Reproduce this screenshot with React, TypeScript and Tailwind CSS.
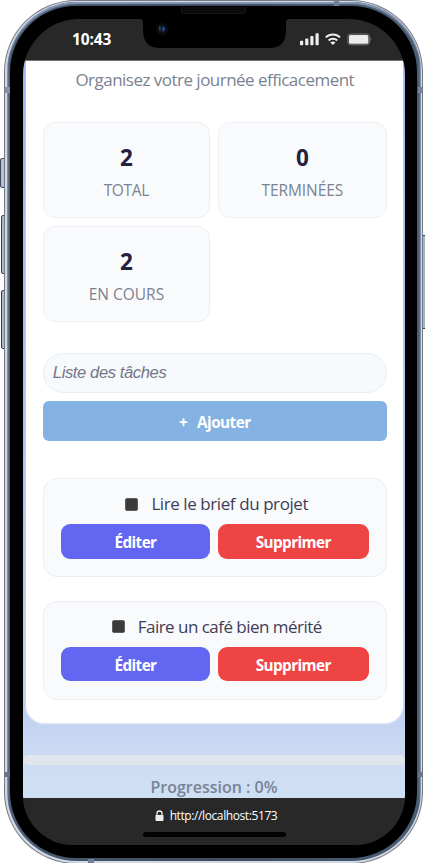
import React from "react";

const ui = "font-['Open_Sans','Noto_Sans',sans-serif]";

function Stat({ value, label, tracking }: { value: string; label: string; tracking: string }) {
  return (
    <div className="flex h-[96px] flex-col items-center rounded-[12px] border border-[#eeeff4] bg-[#f9fafc] pt-[21px]">
      <span className="text-[22.5px] leading-[28px] font-bold text-[#25213f]">{value}</span>
      <span className={"mt-[8px] text-[15.5px] leading-[20px] whitespace-nowrap text-[#7b8291] " + tracking}>{label}</span>
    </div>
  );
}

function Task({ title, tracking }: { title: string; tracking: string }) {
  return (
    <div className="h-[99px] rounded-[14px] border border-[#eceef3] bg-[#f9fafc] px-[17.2px] pt-[13px]">
      <div className="flex h-[24px] items-center justify-center pl-[4px]">
        <span className="mr-[13px] size-[13px] rounded-[2px] border border-[#5d5f60] bg-[#3b3b3b]" />
        <span className={"text-[17px] leading-[24px] whitespace-nowrap text-[#403d57] " + tracking}>{title}</span>
      </div>
      <div className="mt-[8px] grid grid-cols-[149px_1fr] gap-[8px] text-[15.3px] leading-[34px] font-bold tracking-[-0.6px] text-white">
        <button className="h-[34.5px] rounded-[9px] bg-[#6366f1] pt-px">Éditer</button>
        <button className="h-[34.5px] rounded-[9px] bg-[#ef4444] pt-px">Supprimer</button>
      </div>
    </div>
  );
}

function StatusIcons() {
  return (
    <svg className="mt-[11px] h-[18px] w-[76px]" viewBox="298 30 76 18" fill="none">
      <g fill="#ececec">
        <rect x="300" y="40.8" width="3.2" height="4.4" rx="0.8" />
        <rect x="305.2" y="38.6" width="3.2" height="6.6" rx="0.8" />
        <rect x="310.3" y="36" width="3.2" height="9.2" rx="0.8" />
        <rect x="315.5" y="33.2" width="3.2" height="12" rx="0.8" />
      </g>
      <g stroke="#ececec" strokeWidth="2">
        <path d="M325.8 37.4a10.2 10.2 0 0 1 14.2 0" />
        <path d="M328.6 40.5a6.2 6.2 0 0 1 8.6 0" />
      </g>
      <path d="M330.3 42.6a3.8 3.8 0 0 1 5.2 0L332.9 45z" fill="#ececec" />
      <rect x="347.9" y="34" width="21.6" height="10.8" rx="2.8" stroke="#777" strokeWidth="1" />
      <rect x="349" y="35" width="19.4" height="8.8" rx="1.6" fill="#ececec" />
      <path d="M370.7 37.6q1.4 1.6 0 3.6z" fill="#888" />
    </svg>
  );
}

function Phone({ children }: { children: React.ReactNode }) {
  return (
    <div className="relative h-[863px] w-[425px] overflow-hidden bg-white px-[4px]">
      <span className="absolute top-[158px] left-0 h-[30px] w-[6px] rounded-l-[2px] border border-[#3d4a5b] bg-[#b5c0d6]" />
      <span className="absolute top-[215px] left-[1px] h-[59px] w-[5px] rounded-l-[2px] border border-[#34404f] bg-[#aab8c8]" />
      <span className="absolute top-[290px] left-[1px] h-[59px] w-[5px] rounded-l-[2px] border border-[#34404f] bg-[#aab8c8]" />
      <span className="absolute top-[235px] left-[421px] h-[94px] w-[6px] border border-[#34404f] bg-[#a3b1c2]" />
      <div className="relative h-[864px] w-[419px] rounded-[72px] bg-[#737a84] p-px">
        <div className="h-full rounded-[71px] bg-[#d4d8e2] px-[1.5px] pt-px pb-[2px]">
          <div className="h-full rounded-[70px] bg-[linear-gradient(90deg,#8fa0b8_0,#4a5d74_2px,#3c4b5e_50%,#4a5d74_calc(100%-2px),#8fa0b8_100%)] px-[3.5px] pt-[4px] pb-[3px] shadow-[inset_0_2px_1px_#8799b7]">
            <div className="h-full rounded-[66px] bg-black px-[13px] pt-[13px] pb-[13px]">{children}</div>
          </div>
        </div>
      </div>
      <span className="absolute top-[87px] left-[5px] h-[6px] w-[5px] bg-[#8492ad]" />
      <span className="absolute top-[87px] left-[418px] h-[6px] w-[4px] bg-[#7583a0]" />
      <span className="absolute top-[772px] left-[5px] h-[5px] w-[5px] bg-[#67758e]" />
      <span className="absolute top-[772px] left-[418px] h-[5px] w-[4px] bg-[#67758e]" />
      <span className="absolute top-[1px] left-[334px] h-[5px] w-[5px] bg-[#71819f]" />
      <span className="absolute top-[859px] left-[88px] h-[4px] w-[6px] bg-[#71819f]" />
      <span className="absolute top-[7px] left-[181px] h-[7px] w-[65px] rounded-b-[2px] border-x border-b border-[#151515] bg-[#0b0b0b]" />
      <svg className="absolute top-[18px] left-[136px] h-[32px] w-[158px]" viewBox="136 18 158 32">
        <path d="M138 18.6C142 18.6 143 20 143 24V30Q143 48 160 48H269Q286 48 286 30V24C286 20 287 18.6 291 18.6Z" fill="#000" />
        <circle cx="162" cy="29" r="6" fill="#0b0c10" />
        <circle cx="162" cy="29" r="3.4" fill="#10182b" />
        <ellipse cx="159.8" cy="28.5" rx="1" ry="2.2" fill="#254850" />
        <ellipse cx="163.6" cy="29" rx="1.1" ry="2.3" fill="#344aaa" />
      </svg>
    </div>
  );
}

export default function App() {
  return (
    <div className={ui}>
      <Phone>
        <div className="flex h-[826px] w-[382px] flex-col overflow-hidden rounded-t-[56px] rounded-b-[50px] bg-[#282828]">
          <div className="flex h-[42px] shrink-0 justify-between border-b border-[#777] pr-[31px] pl-[49px]">
            <span className="pt-[9px] text-[15.5px] leading-[22px] font-bold tracking-[-0.1px] text-white">10:43</span>
            <StatusIcons />
          </div>
          <main className="h-[737px] shrink-0 overflow-hidden bg-[linear-gradient(180deg,#9db3ee_0%,#a9c0f0_50%,#bdcff0_88%,#c6d5f2_91%,#cedef3_97%)]">
            <section className="ml-[3px] h-[662px] w-[377px] rounded-b-[18px] bg-white pt-[7px] pr-[16.3px] pl-[16.8px] shadow-[0_1px_2px_#e8edf8]">
              <p className="text-center text-[17px] leading-[24px] tracking-[-0.52px] whitespace-nowrap text-[#7b8291]">Organisez votre journée efficacement</p>
              <div className="mt-[30px] grid grid-cols-[167.2px_1fr] gap-[8px]">
                <Stat value="2" label="TOTAL" tracking="tracking-[-0.3px]" />
                <Stat value="0" label="TERMINÉES" tracking="tracking-[-0.1px]" />
                <Stat value="2" label="EN COURS" tracking="tracking-[0px]" />
              </div>
              <input
                className="mt-[31px] block h-[40px] w-full rounded-[20px] border border-[#eaedf3] bg-[#f6fafd] px-[9px] font-['Liberation_Sans',sans-serif] text-[16.6px] tracking-[-0.4px] italic placeholder:text-[#757587] placeholder:opacity-100"
                placeholder="Liste des tâches"
              />
              <button className="mt-[8px] flex h-[40px] w-full items-center justify-center rounded-[6px] bg-[#84b2e2] pt-[2px] text-[15.3px] font-bold tracking-[-0.55px] text-white">
                <span className="mr-[10px]">+</span>Ajouter
              </button>
              <div className="mt-[37px] flex flex-col gap-[23.5px]">
                <Task title="Lire le brief du projet" tracking="tracking-[-0.42px]" />
                <Task title="Faire un café bien mérité" tracking="tracking-[-0.53px]" />
              </div>
            </section>
            <div className="mt-[32px] h-[10px] rounded-[5px] bg-[#dfe6ed]" />
            <p className="mt-[10px] text-center text-[16px] leading-[24px] font-semibold text-[#788396]">Progression : 0%</p>
          </main>
          <footer className="flex flex-1 flex-col items-center bg-[#282828]">
            <div className="mt-[9px] flex h-[17px] items-center pl-[4px] text-[12px] tracking-[-0.4px] text-white">
              <svg className="mr-[6px] h-[12px] w-[9px]" viewBox="0 0 9 12">
                <rect x="0.5" y="5" width="8" height="6" rx="0.8" fill="#eee" />
                <path d="M2 5V3.5a2.5 2.5 0 0 1 5 0V5" fill="none" stroke="#eee" strokeWidth="1.3" />
              </svg>
              http://localhost:5173
            </div>
            <div className="mt-[8px] h-[5px] w-[143px] rounded-full bg-black" />
          </footer>
        </div>
      </Phone>
    </div>
  );
}
